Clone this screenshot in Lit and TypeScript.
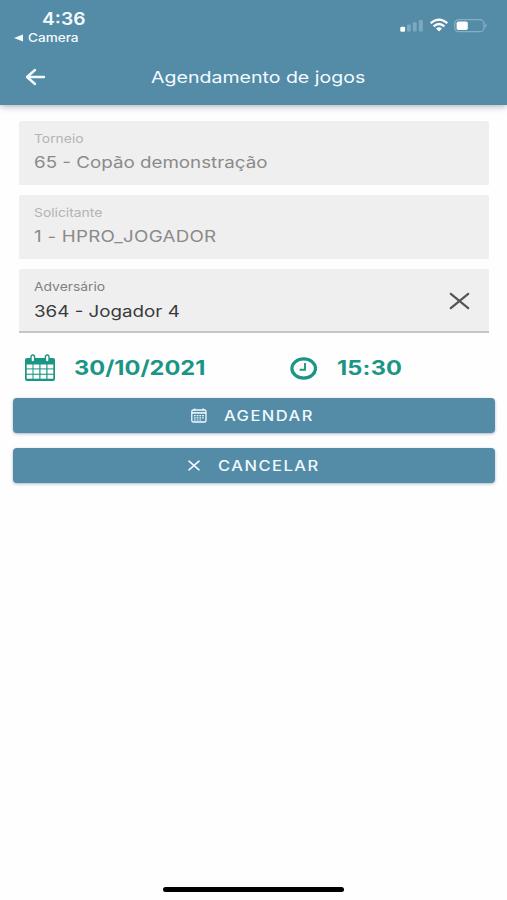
import { LitElement, html, css, svg } from "lit";
import { customElement, property } from "lit/decorators.js";

@customElement("form-field")
class FormField extends LitElement {
  @property() label = "";
  @property() value = "";
  @property({ type: Boolean, reflect: true }) active = false;

  static styles = css`
    :host {
      display: flex;
      align-items: flex-start;
      justify-content: space-between;
      box-sizing: border-box;
      height: 64px;
      padding: 0 19px 0 15px;
      background: #efefef;
      border-radius: 2px 2px 0 0;
      color: #8a8a8a;
    }
    :host([active]) { border-bottom: 2px solid #c6c6c6; color: #3a3a3a; }
    .label, .value { transform-origin: left; white-space: nowrap; width: max-content; }
    .label { font-size: 12px; line-height: 16px; color: #b4b4b4; padding-top: 10px; transform: scaleX(1.155); }
    :host([active]) .label { color: #808080; }
    .value { font-size: 16px; line-height: 22px; padding-top: 4px; letter-spacing: var(--value-spacing, 0); transform: scaleX(1.173); }
    :host([active]) .value { padding-top: 5px; }
    .clear { width: 21px; height: 18px; display: block; margin-top: 23px; }
  `;

  render() {
    return html`
      <div>
        <div class="label">${this.label}</div>
        <div class="value">${this.value}</div>
      </div>
      ${this.active
        ? html`<svg class="clear" viewBox="0 0 21 18" fill="none" stroke="#555" stroke-width="2.2" stroke-linecap="round">
            <path d="M1.8 1.8 19.2 16.2M19.2 1.8 1.8 16.2" />
          </svg>`
        : ""}
    `;
  }
}

@customElement("app-root")
class AppRoot extends LitElement {
  static styles = css`
    :host {
      display: flex;
      flex-direction: column;
      width: 507px;
      height: 900px;
      background: #fefefe;
      font-family: Inter, "Liberation Sans", sans-serif;
      overflow: hidden;
    }
    svg { display: block; flex: none; }
    .wide { display: block; width: max-content; white-space: nowrap; transform-origin: left; }
    header { height: 105px; flex: none; background: #548ba7; box-shadow: 0 1px 7px rgba(40, 50, 80, 0.42); color: #f3fbff; }
    .status { display: flex; justify-content: space-between; height: 50px; }
    .clock { font-size: 17px; font-weight: 600; line-height: 20px; padding-top: 9px; margin-left: 42px; transform: scaleX(1.13); }
    .origin { display: flex; align-items: center; gap: 5px; padding-left: 14px; height: 18px; }
    .origin .wide { font-size: 11.5px; font-weight: 500; transform: scaleX(1.18); }
    .indicators { display: flex; align-items: center; gap: 6px; height: 15px; margin: 18px 20px 0 0; }
    .bar { display: grid; grid-template-columns: 151px 1fr; align-items: center; height: 54px; }
    .back { margin-left: 25px; }
    .title { font-size: 16.5px; transform: scaleX(1.185); }
    .fields { display: flex; flex-direction: column; gap: 10px; padding: 16px 18px 0 19px; }
    .code { --value-spacing: 0.2px; }
    .when { display: flex; height: 65px; padding-left: 25px; align-items: center; color: #1b9686; }
    .slot { display: flex; align-items: center; height: 30px; padding-top: 5px; }
    .date { width: 265px; gap: 19px; }
    .time { gap: 20px; }
    .when .wide { font-size: 20px; line-height: 26px; font-weight: 700; transform: scaleX(1.18); }
    .time .wide { letter-spacing: 0.15px; }
    .actions { display: flex; flex-direction: column; gap: 15px; padding: 0 12px 0 13px; }
    button {
      display: flex; align-items: center; height: 35px; width: 100%;
      border: 0; border-radius: 4px; background: #548ba7; color: #effaff;
      font: 500 14px/20px Inter, "Liberation Sans", sans-serif;
      letter-spacing: 1.25px; box-shadow: 0 1px 3px rgba(60, 80, 130, 0.42);
    }
    button .wide { transform: scaleX(1.18); }
    .book { gap: 17px; padding: 0 0 0 178px; }
    .cancel { gap: 18px; padding: 0 0 0 175px; }
    .home { width: 181px; height: 5px; border-radius: 3px; background: #000; margin: auto auto 8px 163px; }
  `;

  render() {
    return html`
      <header>
        <div class="status">
          <div>
            <span class="wide clock">4:36</span>
            <div class="origin">
              <svg width="9" height="8" viewBox="0 0 9 8"><path d="M0 4 9 .4v7.2z" fill="currentColor" /></svg>
              <span class="wide">Camera</span>
            </div>
          </div>
          <div class="indicators">
            <svg width="24" height="15" viewBox="0 0 24 15" fill="#7ba9bf">
              <rect x="0.3" y="8.7" width="4.8" height="5" rx="1.3" fill="#fff" />
              <rect x="7" y="6.5" width="3.8" height="7" rx="1" />
              <rect x="12.8" y="4.3" width="3.8" height="9.2" rx="1" />
              <rect x="18.8" y="2" width="4" height="11.5" rx="1" />
            </svg>
            <svg width="18" height="15" viewBox="0 0 18 15" fill="none" stroke="#fff" stroke-width="2.3">
              <path d="M.7 5.2Q9-1.9 17.3 5.2" />
              <path d="M3.6 8.3Q9 3.8 14.4 8.3" />
              <path d="M6 10.5Q9 8.2 12 10.5L9 13.4Z" fill="#fff" stroke="none" />
            </svg>
            <svg width="33" height="15" viewBox="0 0 33 15">
              <rect x="0.7" y="1.7" width="29.3" height="12" rx="4" fill="none" stroke="#85b0c4" stroke-width="1.3" />
              <rect x="2.6" y="3.4" width="11.2" height="8.6" rx="1.8" fill="#fff" />
              <path d="M31.3 5.4q3 2.2 0 4.4z" fill="#85b0c4" />
            </svg>
          </div>
        </div>
        <div class="bar">
          <svg class="back" width="21" height="18" viewBox="0 0 21 18" fill="none" stroke="currentColor" stroke-width="2.4" stroke-linecap="round" stroke-linejoin="round">
            <path d="M10 2 2 9l8 7M2.5 9H19" />
          </svg>
          <span class="wide title">Agendamento de jogos</span>
        </div>
      </header>
      <div class="fields">
        <form-field label="Torneio" value="65 - Copão demonstração"></form-field>
        <form-field class="code" label="Solicitante" value="1 - HPRO_JOGADOR"></form-field>
        <form-field label="Adversário" value="364 - Jogador 4" active></form-field>
      </div>
      <div class="when">
        <div class="slot date">
          <svg width="30" height="28" viewBox="0 0 30 28">
            <path d="M2 4h26q2 0 2 2v19q0 2-2 2H2q-2 0-2-2V6q0-2 2-2z" fill="currentColor" />
            <g fill="#fefefe">
              ${[10.5, 15.4, 20.8].map((y) =>
                [1.7, 8.5, 15.5, 22.5].map(
                  (x) => svg`<rect x=${x} y=${y} width="5.8" height=${y === 15.4 ? 4.3 : 3.9} />`,
                ),
              )}
            </g>
            <g fill="#fefefe" stroke="currentColor" stroke-width="1.4">
              <rect x="6" y="1" width="3.6" height="7" rx="1.8" />
              <rect x="20.4" y="1" width="3.6" height="7" rx="1.8" />
            </g>
          </svg>
          <span class="wide">30/10/2021</span>
        </div>
        <div class="slot time">
          <svg width="27" height="23" viewBox="0 0 27 23" fill="none" stroke="currentColor">
            <ellipse cx="13.7" cy="11.5" rx="11.8" ry="9.6" stroke-width="3.2" />
            <path d="M15 6v6.7H9.6" stroke-width="1.9" />
          </svg>
          <span class="wide">15:30</span>
        </div>
      </div>
      <div class="actions">
        <button class="book">
          <svg width="16" height="15" viewBox="0 0 16 15" fill="none" stroke="currentColor">
            <rect x="0.8" y="2" width="14.2" height="12" rx="1.6" stroke-width="1.3" />
            <path d="M1 4.9h14" stroke-width="1.6" />
            <path d="M3.6.4v2M12.2.4v2" stroke-width="1.5" />
            <path d="M3 7.6h10M3 9.8h10M3 12h8" stroke-width="1.2" stroke-dasharray="1.7 1" />
          </svg>
          <span class="wide">AGENDAR</span>
        </button>
        <button class="cancel">
          <svg width="12" height="11" viewBox="0 0 12 11" fill="none" stroke="currentColor" stroke-width="1.6" stroke-linecap="round">
            <path d="M1 1.2 11 9.8M11 1.2 1 9.8" />
          </svg>
          <span class="wide">CANCELAR</span>
        </button>
      </div>
      <div class="home"></div>
    `;
  }
}
